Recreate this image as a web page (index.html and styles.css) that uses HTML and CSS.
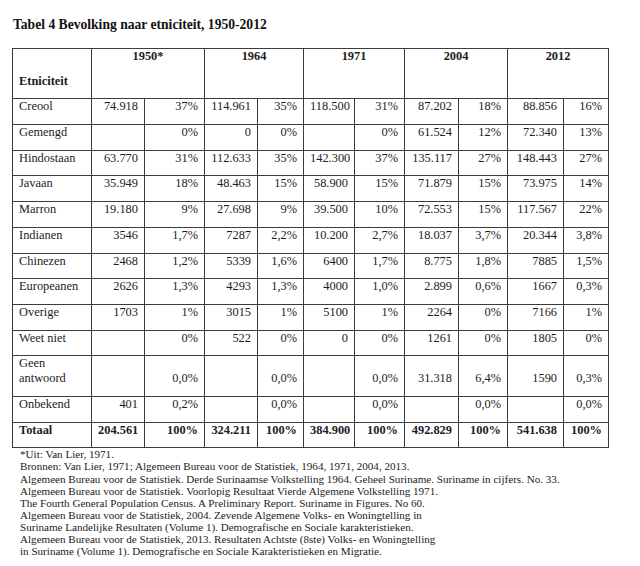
FILE: index.html
```html
<!DOCTYPE html>
<html lang="nl">
<head>
<meta charset="utf-8">
<title>Tabel 4 Bevolking naar etniciteit, 1950-2012</title>
<link rel="stylesheet" href="styles.css">
</head>
<body>
<div class="page">
  <h1 class="title">Tabel 4 Bevolking naar etniciteit, 1950-2012</h1>
  <table class="data">
    <colgroup>
      <col class="c-eth">
      <col class="c1"><col class="c2">
      <col class="c3"><col class="c4">
      <col class="c5"><col class="c6">
      <col class="c7"><col class="c8">
      <col class="c9"><col class="c10">
    </colgroup>
    <thead>
      <tr class="head">
        <th class="eth">Etniciteit</th>
        <th class="year" colspan="2">1950*</th>
        <th class="year" colspan="2">1964</th>
        <th class="year" colspan="2">1971</th>
        <th class="year" colspan="2">2004</th>
        <th class="year" colspan="2">2012</th>
      </tr>
    </thead>
    <tbody>
      <tr><td class="eth">Creool</td><td>74.918</td><td>37%</td><td>114.961</td><td>35%</td><td>118.500</td><td>31%</td><td>87.202</td><td>18%</td><td>88.856</td><td>16%</td></tr>
      <tr><td class="eth">Gemengd</td><td></td><td>0%</td><td>0</td><td>0%</td><td></td><td>0%</td><td>61.524</td><td>12%</td><td>72.340</td><td>13%</td></tr>
      <tr><td class="eth">Hindostaan</td><td>63.770</td><td>31%</td><td>112.633</td><td>35%</td><td>142.300</td><td>37%</td><td>135.117</td><td>27%</td><td>148.443</td><td>27%</td></tr>
      <tr><td class="eth">Javaan</td><td>35.949</td><td>18%</td><td>48.463</td><td>15%</td><td>58.900</td><td>15%</td><td>71.879</td><td>15%</td><td>73.975</td><td>14%</td></tr>
      <tr><td class="eth">Marron</td><td>19.180</td><td>9%</td><td>27.698</td><td>9%</td><td>39.500</td><td>10%</td><td>72.553</td><td>15%</td><td>117.567</td><td>22%</td></tr>
      <tr><td class="eth">Indianen</td><td>3546</td><td>1,7%</td><td>7287</td><td>2,2%</td><td>10.200</td><td>2,7%</td><td>18.037</td><td>3,7%</td><td>20.344</td><td>3,8%</td></tr>
      <tr><td class="eth">Chinezen</td><td>2468</td><td>1,2%</td><td>5339</td><td>1,6%</td><td>6400</td><td>1,7%</td><td>8.775</td><td>1,8%</td><td>7885</td><td>1,5%</td></tr>
      <tr><td class="eth">Europeanen</td><td>2626</td><td>1,3%</td><td>4293</td><td>1,3%</td><td>4000</td><td>1,0%</td><td>2.899</td><td>0,6%</td><td>1667</td><td>0,3%</td></tr>
      <tr><td class="eth">Overige</td><td>1703</td><td>1%</td><td>3015</td><td>1%</td><td>5100</td><td>1%</td><td>2264</td><td>0%</td><td>7166</td><td>1%</td></tr>
      <tr><td class="eth">Weet niet</td><td></td><td>0%</td><td>522</td><td>0%</td><td>0</td><td>0%</td><td>1261</td><td>0%</td><td>1805</td><td>0%</td></tr>
      <tr><td class="eth">Geen<br>antwoord</td><td></td><td>0,0%</td><td></td><td>0,0%</td><td></td><td>0,0%</td><td>31.318</td><td>6,4%</td><td>1590</td><td>0,3%</td></tr>
      <tr><td class="eth">Onbekend</td><td>401</td><td>0,2%</td><td></td><td>0,0%</td><td></td><td>0,0%</td><td></td><td>0,0%</td><td></td><td>0,0%</td></tr>
      <tr class="total"><td class="eth">Totaal</td><td>204.561</td><td>100%</td><td>324.211</td><td>100%</td><td>384.900</td><td>100%</td><td>492.829</td><td>100%</td><td>541.638</td><td>100%</td></tr>
    </tbody>
  </table>
  <div class="notes">
    <p>*Uit: Van Lier, 1971.</p>
    <p>Bronnen: Van Lier, 1971; Algemeen Bureau voor de Statistiek, 1964, 1971, 2004, 2013.</p>
    <p>Algemeen Bureau voor de Statistiek. Derde Surinaamse Volkstelling 1964. Geheel Suriname. Suriname in cijfers. No. 33.</p>
    <p>Algemeen Bureau voor de Statistiek. Voorlopig Resultaat Vierde Algemene Volkstelling 1971.</p>
    <p>The Fourth General Population Census. A Preliminary Report. Suriname in Figures. No 60.</p>
    <p>Algemeen Bureau voor de Statistiek, 2004. Zevende Algemene Volks- en Woningtelling in</p>
    <p>Suriname Landelijke Resultaten (Volume 1). Demografische en Sociale karakteristieken.</p>
    <p>Algemeen Bureau voor de Statistiek, 2013. Resultaten Achtste (8ste) Volks- en Woningtelling</p>
    <p>in Suriname (Volume 1). Demografische en Sociale Karakteristieken en Migratie.</p>
  </div>
</div>
</body>
</html>
```

FILE: styles.css
```css
html, body {
  margin: 0;
  padding: 0;
  background: #ffffff;
}

.page {
  padding: 17px 0 0 12px;
  font-family: "Liberation Serif", "Times New Roman", serif;
  color: #1c1c1c;
}

.title {
  margin: 0 0 15px 1px;
  font-size: 13.6px;
  line-height: 16px;
  font-weight: bold;
  color: #111;
}

.data {
  border-collapse: collapse;
  table-layout: fixed;
  width: 597px;
  font-size: 12.4px;
  line-height: 15px;
}

.c-eth { width: 79px; }
.c1 { width: 53px; }
.c2 { width: 60px; }
.c3 { width: 53px; }
.c4 { width: 46px; }
.c5 { width: 51px; }
.c6 { width: 50px; }
.c7 { width: 54px; }
.c8 { width: 49px; }
.c9 { width: 56px; }
.c10 { width: 45px; }

.data th,
.data td {
  border: 1px solid #3c3c3c;
  padding: 0 6px 9.7px 6px;
  vertical-align: bottom;
  text-align: right;
  white-space: nowrap;
}

.data td.eth,
.data th.eth {
  text-align: left;
  padding-left: 6px;
}

.head th {
  height: 39.7px;
  font-weight: bold;
}

.head th.year {
  vertical-align: top;
  text-align: center;
  padding: 0;
}

.total td {
  font-weight: bold;
}

.notes {
  padding: 0 0 0 8px;
  font-size: 11.1px;
  line-height: 12.1px;
}

.notes p {
  margin: 0;
  white-space: nowrap;
}
```
